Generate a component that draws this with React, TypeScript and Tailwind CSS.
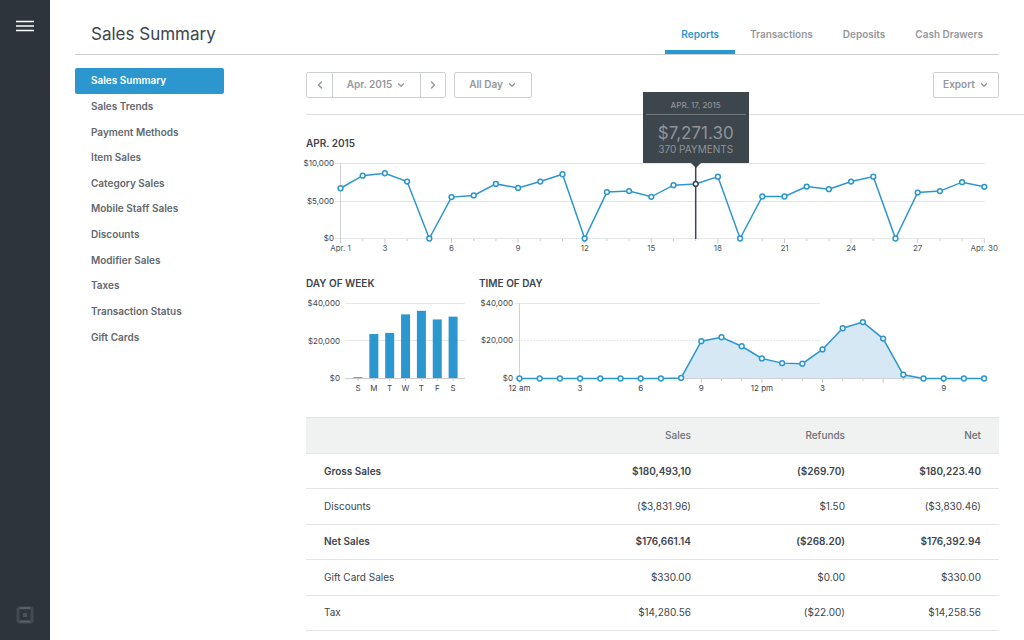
import { FiChevronDown, FiChevronLeft, FiChevronRight } from 'react-icons/fi';

const tabs = ['Reports', 'Transactions', 'Deposits', 'Cash Drawers'];

const reports = [
  'Sales Summary',
  'Sales Trends',
  'Payment Methods',
  'Item Sales',
  'Category Sales',
  'Mobile Staff Sales',
  'Discounts',
  'Modifier Sales',
  'Taxes',
  'Transaction Status',
  'Gift Cards',
];

// Sales per day of the month
const daily = [
  6700, 8380, 8700, 7590, 0, 5520, 5740, 7280, 6750, 7590, 8570, 0, 6190, 6320, 5560,
  7110, 7271, 8250, 0, 5600, 5600, 6930, 6580, 7590, 8250, 0, 6130, 6320, 7510, 6890,
];

const weekdays = [
  { day: 'S', sales: 700 },
  { day: 'M', sales: 23700 },
  { day: 'T', sales: 24300 },
  { day: 'W', sales: 34200 },
  { day: 'T', sales: 36100 },
  { day: 'F', sales: 31500 },
  { day: 'S', sales: 33000 },
];

// Sales per hour, starting at midnight
const hourly = [
  0, 0, 0, 0, 0, 0, 0, 0, 300, 19900, 22000, 17200, 10700, 8200, 7900, 15500, 26800,
  30100, 21300, 2000, 0, 0, 0, 0,
];

const hourLabels: Record<number, string> = {
  0: '12 am',
  3: '3',
  6: '6',
  9: '9',
  12: '12 pm',
  15: '3',
  21: '9',
};

const rows = [
  { name: 'Gross Sales', sales: '$180,493,10', refunds: '($269.70)', net: '$180,223.40', bold: true },
  { name: 'Discounts', sales: '($3,831.96)', refunds: '$1.50', net: '($3,830.46)', bold: false },
  { name: 'Net Sales', sales: '$176,661.14', refunds: '($268.20)', net: '$176,392.94', bold: true },
  { name: 'Gift Card Sales', sales: '$330.00', refunds: '$0.00', net: '$330.00', bold: false },
  { name: 'Tax', sales: '$14,280.56', refunds: '($22.00)', net: '$14,258.56', bold: false },
];

const DAILY_WIDTH = 693;
const DAILY_LEFT = 34.5;
const DAILY_STEP = 22.2;
const SELECTED = 16;

const dayX = (i: number) => DAILY_LEFT + i * DAILY_STEP;
const dayY = (value: number) => 83.5 - (value / 10000) * 75;

const hourX = (i: number) => 40.5 + i * 20.2;
const salesY = (value: number) => 83.5 - (value / 40000) * 75;

function DailyChart() {
  const line = daily.map((value, i) => `${dayX(i)},${dayY(value)}`).join(' ');
  return (
    <svg viewBox="0 0 693 104" className="block w-full overflow-visible" role="img" aria-label="Sales by day">
      <g stroke="#e3e5e6">
        <path d="M29 8.5H679M29 46.5H679M29 83.5H679" />
        <path d="M34.5 8V88" stroke="#cfd2d4" />
      </g>
      {daily.map((_, i) => (
        <path key={i} d={`M${dayX(i)} 84v${i % 3 === 2 || i === 0 ? 4 : 2}`} stroke="#c9cccf" />
      ))}
      <g className="fill-[#3d454d] text-[8px]" textAnchor="end">
        <text x="28" y="11">$10,000</text>
        <text x="28" y="49">$5,000</text>
        <text x="28" y="86">$0</text>
      </g>
      <g className="fill-[#50575e] text-[8px]" textAnchor="middle">
        <text x={dayX(0)} y="96">Apr. 1</text>
        {[3, 6, 9, 12, 15, 18, 21, 24, 27].map((day) => (
          <text key={day} x={dayX(day - 1)} y="96">{day}</text>
        ))}
        <text x={dayX(29)} y="96">Apr. 30</text>
      </g>
      <polyline points={line} fill="none" stroke="#2c97cf" strokeWidth="1.5" />
      <path d={`M${dayX(SELECTED)} 8V84`} stroke="#3d454d" strokeWidth="1.5" />
      {daily.map((value, i) => (
        <circle
          key={i}
          cx={dayX(i)}
          cy={dayY(value)}
          r="2.4"
          fill="#fff"
          stroke={i === SELECTED ? '#3d454d' : '#2c97cf'}
          strokeWidth="1.5"
        />
      ))}
    </svg>
  );
}

function WeekChart() {
  return (
    <svg viewBox="0 0 160 102" className="block w-full overflow-visible" role="img" aria-label="Sales by day of week">
      <path d="M39 8.5H159M39 45.5H159" stroke="#e6e8e9" />
      <g className="fill-[#3d454d] text-[8px]" textAnchor="end">
        <text x="34" y="11">$40,000</text>
        <text x="34" y="49">$20,000</text>
        <text x="34" y="86">$0</text>
      </g>
      {weekdays.map((item, i) => {
        const x = 52 + i * 15.85;
        return (
          <g key={i}>
            <rect x={x - 4.5} y={salesY(item.sales)} width="9" height={83.5 - salesY(item.sales)} fill="#2c97cf" />
            <path d={`M${x} 84v2`} stroke="#c9cccf" />
            <text x={x} y="96" textAnchor="middle" className="fill-[#3d454d] text-[8px]">{item.day}</text>
          </g>
        );
      })}
      <path d="M39 83.5H159" stroke="#c9cccf" />
    </svg>
  );
}

function HourChart() {
  const line = hourly.map((value, i) => `${hourX(i)},${salesY(value)}`).join(' ');
  return (
    <svg viewBox="0 0 520 102" className="block w-full overflow-visible" role="img" aria-label="Sales by time of day">
      <path d="M36 8.5H341" stroke="#e6e8e9" />
      <path d="M36 45.5H341" stroke="#e3e5e6" strokeDasharray="2 1" />
      <path d="M40.5 8V88M36 83.5H505" stroke="#cfd2d4" />
      {hourly.map((_, i) => (
        <path key={i} d={`M${hourX(i)} 84v${i % 3 === 0 ? 4 : 2}`} stroke="#c9cccf" />
      ))}
      <g className="fill-[#3d454d] text-[8px]" textAnchor="end">
        <text x="34" y="11">$40,000</text>
        <text x="34" y="48">$20,000</text>
        <text x="34" y="86">$0</text>
      </g>
      {hourly.map((_, i) => (
        <text key={i} x={hourX(i)} y="96" textAnchor="middle" className="fill-[#3d454d] text-[8px]">
          {hourLabels[i]}
        </text>
      ))}
      <polygon points={`${hourX(0)},83 ${line} ${hourX(23)},83`} fill="#d5e8f4" />
      <polyline points={line} fill="none" stroke="#2c97cf" strokeWidth="1.5" />
      {hourly.map((value, i) => (
        <circle key={i} cx={hourX(i)} cy={salesY(value)} r="2.4" fill="#fff" stroke="#2c97cf" strokeWidth="1.5" />
      ))}
    </svg>
  );
}

export default function App() {
  return (
    <div className="flex min-h-screen bg-white font-['Inter',sans-serif] text-[10px] text-[#3d454d]">
      {/* Dark rail with menu and logo */}
      <aside className="flex w-[50px] shrink-0 flex-col items-center justify-between bg-[#2d343c] pt-5 pb-4">
        <button aria-label="Menu">
          <svg width="18" height="12" viewBox="0 0 18 12" className="block" stroke="#fff" strokeWidth="1.4">
            <path d="M0 1.5H18M0 6H18M0 10.5H18" />
          </svg>
        </button>
        <svg width="18" height="18" viewBox="0 0 18 18" fill="none" aria-hidden="true">
          <rect x="2" y="2" width="14" height="14" rx="1" stroke="#434a52" strokeWidth="3" />
          <path d="M4 2H14M4 15.5H14" stroke="#596068" strokeWidth="2" />
          <rect x="7" y="7" width="4" height="4" fill="#4a5159" />
        </svg>
      </aside>

      <div className="min-w-0 flex-1">
        <header className="mx-[25px] flex h-[55px] items-end justify-between border-b border-[#cdd0d1]">
          <h1 className="pb-2 pl-4 text-[17px] leading-6">Sales Summary</h1>
          <nav className="flex">
            {tabs.map((tab, i) => (
              <a
                key={tab}
                href="#"
                className={
                  i === 0
                    ? 'border-b-4 border-[#2c97cf] px-4 pb-2 leading-4 font-semibold text-[#2c97cf]'
                    : 'border-b-4 border-transparent px-[15px] pb-2 leading-4 font-semibold text-[#94989c] last:pr-4'
                }
              >
                {tab}
              </a>
            ))}
          </nav>
        </header>

        <div className="flex">
          <nav className="mt-[13px] ml-[25px] grid h-[282px] w-[149px] shrink-0 auto-rows-fr">
            {reports.map((report, i) => (
              <a
                key={report}
                href="#"
                className={
                  i === 0
                    ? 'flex items-center rounded-xs bg-[#2c97cf] pl-4 font-semibold text-white'
                    : 'flex items-center pl-4 font-semibold text-[#62686e]'
                }
              >
                {report}
              </a>
            ))}
          </nav>

          <main className="ml-[82px] min-w-0 flex-1">
            {/* Filters */}
            <div className="flex h-[60px] items-center gap-2 border-b border-[#dcdedf] pr-[25px] font-semibold text-[#94989c]">
              <div className="flex h-[26px] divide-x divide-[#cdd0d1] rounded-xs border border-[#cdd0d1]">
                <button aria-label="Previous month" className="flex w-[26px] items-center justify-center">
                  <FiChevronLeft className="size-3" strokeWidth={3} />
                </button>
                <button className="flex w-[88px] items-center justify-center gap-1">
                  Apr. 2015
                  <FiChevronDown className="size-2.5" strokeWidth={3} />
                </button>
                <button aria-label="Next month" className="flex w-6 items-center justify-center">
                  <FiChevronRight className="size-3" strokeWidth={3} />
                </button>
              </div>
              <button className="flex h-[26px] w-[78px] items-center justify-center gap-1 rounded-xs border border-[#cdd0d1]">
                All Day
                <FiChevronDown className="size-2.5" strokeWidth={3} />
              </button>
              <button className="ml-auto flex h-[26px] w-[66px] items-center justify-center gap-1 rounded-xs border border-[#cdd0d1]">
                Export
                <FiChevronDown className="size-2.5" strokeWidth={3} />
              </button>
            </div>

            <div className="pt-5 pr-[25px]">
              <h2 className="leading-4 font-semibold">APR. 2015</h2>
              <div className="relative mt-1">
                <DailyChart />
                {/* Tooltip of the selected day */}
                <div
                  className="absolute bottom-full -mb-2 flex h-[71px] w-[106px] -translate-x-1/2 flex-col items-center bg-[#3d454d] px-[3px] text-[#8f9397]"
                  style={{ left: `${(dayX(SELECTED) / DAILY_WIDTH) * 100}%` }}
                >
                  <p className="w-full border-b border-[#737a80] pt-1 text-center text-[8px] leading-[18px] font-medium">
                    APR. 17, 2015
                  </p>
                  <p className="pt-2 text-[17px] leading-5">$7,271.30</p>
                  <p className="leading-3">370 PAYMENTS</p>
                  <svg width="10" height="5" viewBox="0 0 10 5" className="absolute top-full" fill="#3d454d">
                    <path d="M0 0H10L5 5Z" />
                  </svg>
                </div>
              </div>

              <div className="mt-4 grid grid-cols-[160fr_520fr] gap-[13px]">
                <section>
                  <h2 className="mb-1 leading-4 font-semibold">DAY OF WEEK</h2>
                  <WeekChart />
                </section>
                <section>
                  <h2 className="mb-1 leading-4 font-semibold">TIME OF DAY</h2>
                  <HourChart />
                </section>
              </div>

              <table className="mt-5 h-[214px] w-full table-fixed border-collapse text-right">
                <thead>
                  <tr className="h-9 border-y border-[#e3e6e6] bg-[#f0f2f2] text-[#6b7177]">
                    <th className="pl-[18px]" aria-label="Item"></th>
                    <th className="w-[154px] pr-[18px] font-medium">Sales</th>
                    <th className="w-[154px] pr-[18px] font-medium">Refunds</th>
                    <th className="w-[136px] pr-[18px] font-medium">Net</th>
                  </tr>
                </thead>
                <tbody>
                  {rows.map((row) => (
                    <tr
                      key={row.name}
                      className={row.bold ? 'border-b border-[#e3e6e6] font-semibold' : 'border-b border-[#e3e6e6]'}
                    >
                      <td className="pl-[18px] text-left">{row.name}</td>
                      <td className="pr-[18px]">{row.sales}</td>
                      <td className="pr-[18px]">{row.refunds}</td>
                      <td className="pr-[18px]">{row.net}</td>
                    </tr>
                  ))}
                </tbody>
              </table>
            </div>
          </main>
        </div>
      </div>
    </div>
  );
}
